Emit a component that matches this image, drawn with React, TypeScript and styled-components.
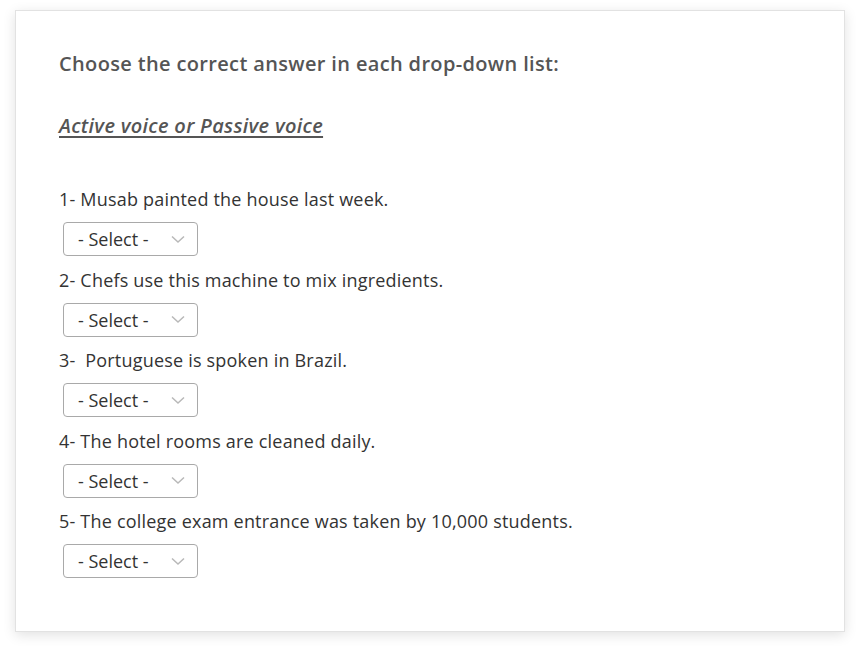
import React from "react";
import styled, { createGlobalStyle } from "styled-components";

const Global = createGlobalStyle`
  html, body { margin: 0; padding: 0; background: #fff; }
  body { font-family: "Open Sans", "Liberation Sans", sans-serif; }
`;

const Page = styled.div`
  padding: 10px 16px 20px 15px;
`;

const Card = styled.div`
  width: 830px;
  height: 622px;
  box-sizing: border-box;
  background: #fff;
  border: 1px solid #e2e2e2;
  box-shadow: 0 3px 12px rgba(0, 0, 0, 0.12);
  padding: 39px 43px;
  display: flex;
  flex-direction: column;
`;

const Title = styled.div`
  font-size: 20px;
  font-weight: 600;
  line-height: 27px;
  letter-spacing: 0.35px;
  color: #555;
`;

const Subtitle = styled.div`
  margin-top: 35px;
  font-size: 20px;
  font-weight: 600;
  font-style: italic;
  line-height: 27px;
  letter-spacing: 0.3px;
  color: #555;
  text-decoration: underline;
  text-underline-offset: 3px;
`;

const List = styled.div`
  margin-top: 48px;
  display: flex;
  flex-direction: column;
`;

const Question = styled.div`
  font-size: 18px;
  line-height: 24px;
  letter-spacing: 0.2px;
  color: #333;
`;

const SelectBox = styled.div`
  margin: 11px 0 11.5px 4px;
  width: 135px;
  height: 34px;
  box-sizing: border-box;
  border: 1px solid #a9a9a9;
  border-radius: 4px;
  display: flex;
  align-items: center;
  justify-content: space-between;
  padding: 0 12px 0 14px;
  font-size: 18px;
  color: #333;
  background: #fff;
`;

const Chevron = () => (
  <svg width="14" height="9" viewBox="0 0 14 9" fill="none">
    <path d="M1 1.5 L7 7 L13 1.5" stroke="#b8b8b8" strokeWidth="1.5" />
  </svg>
);

const questions = [
  "1- Musab painted the house last week.",
  "2- Chefs use this machine to mix ingredients.",
  "3-\u00a0 Portuguese is spoken in Brazil.",
  "4- The hotel rooms are cleaned daily.",
  "5- The college exam entrance was taken by 10,000 students.",
];

export default function App() {
  return (
    <>
      <Global />
      <Page>
        <Card>
          <Title>Choose the correct answer in each drop-down list:</Title>
          <Subtitle>Active voice or Passive voice</Subtitle>
          <List>
            {questions.map((q) => (
              <React.Fragment key={q}>
                <Question>{q}</Question>
                <SelectBox>
                  <span>- Select -</span>
                  <Chevron />
                </SelectBox>
              </React.Fragment>
            ))}
          </List>
        </Card>
      </Page>
    </>
  );
}
